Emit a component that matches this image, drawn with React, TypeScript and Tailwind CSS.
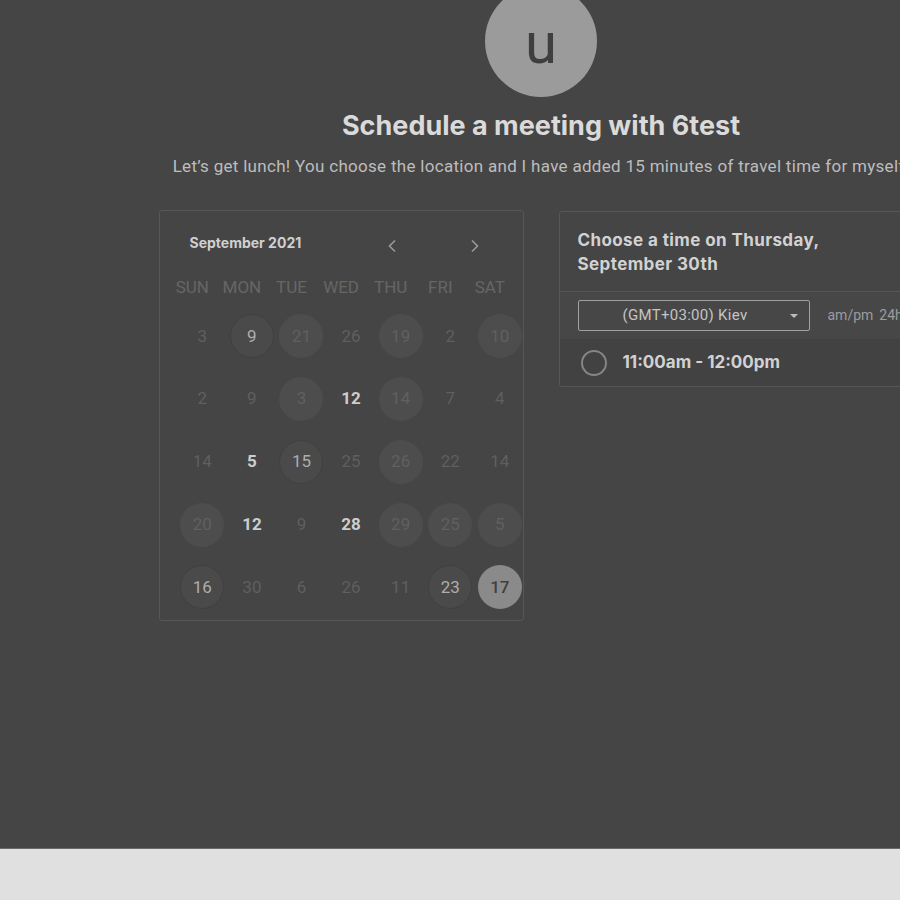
import React from "react";

type Kind = "dim" | "circle" | "bold" | "pattern" | "selected";
type Cell = [string, Kind];

const weeks: Cell[][] = [
  [["3", "dim"], ["9", "pattern"], ["21", "circle"], ["26", "dim"], ["19", "circle"], ["2", "dim"], ["10", "circle"]],
  [["2", "dim"], ["9", "dim"], ["3", "circle"], ["12", "bold"], ["14", "circle"], ["7", "dim"], ["4", "dim"]],
  [["14", "dim"], ["5", "bold"], ["15", "pattern"], ["25", "dim"], ["26", "circle"], ["22", "dim"], ["14", "dim"]],
  [["20", "circle"], ["12", "bold"], ["9", "dim"], ["28", "bold"], ["29", "circle"], ["25", "circle"], ["5", "circle"]],
  [["16", "pattern"], ["30", "dim"], ["6", "dim"], ["26", "dim"], ["11", "dim"], ["23", "pattern"], ["17", "selected"]],
];

const days = ["SUN", "MON", "TUE", "WED", "THU", "FRI", "SAT"];

function DayCell({ label, kind }: { label: string; kind: Kind }) {
  let cls = "";
  if (kind === "dim") cls = "text-[#5f5f5f]";
  if (kind === "bold") cls = "text-[#cdcdcd] font-bold";
  if (kind === "circle") cls = "bg-[#4d4d4d] text-[#606060]";
  if (kind === "pattern") cls = "bg-[#4a4a4a] border border-[#404040] text-[#adadad]";
  if (kind === "selected") cls = "bg-[#8a8a8a] text-[#404040] font-medium";
  return (
    <div className="flex items-center justify-center h-[62.75px]">
      <div className={`w-[44px] h-[44px] rounded-full flex items-center justify-center text-[17px] ${cls}`}>{label}</div>
    </div>
  );
}

export default function App() {
  return (
    <div className="w-[900px] h-[900px] overflow-hidden bg-[#e0e0e0] flex flex-col" style={{ fontFamily: "Roboto, 'Liberation Sans', sans-serif" }}>
      <div className="h-[849px] bg-[#454545] border-b border-[#6a6a6a] overflow-hidden shrink-0">
        <div className="w-[1082px] flex flex-col items-center">
          <div className="w-[112px] h-[112px] rounded-full bg-[#9b9b9b] mt-[-15px] flex items-center justify-center text-[#3f3f3f] text-[58px] leading-none pt-[4px]">
            u
          </div>
          <h1 className="mt-[14px] text-[27px] leading-[30px] font-bold text-[#dadada]" style={{ fontFamily: "Inter, sans-serif" }}>
            Schedule a meeting with 6test
          </h1>
          <p className="mt-[14px] text-[17px] tracking-[0.3px] leading-[22px] text-[#bdbdbd] whitespace-nowrap">
            Let’s get lunch! You choose the location and I have added 15 minutes of travel time for myself.
          </p>
          <div className="mt-[33px] flex gap-[35px] items-start">
            {/* Calendar */}
            <div className="w-[365px] h-[411px] border border-[#565656] rounded-[3px] overflow-hidden">
              <div className="pt-[22px] pl-[30px] flex items-center h-[42px]" style={{ fontFamily: "Inter, sans-serif" }}>
                <span className="text-[14px] font-bold text-[#d0d0d0] leading-[20px]">September 2021</span>
                <span className="ml-[86px] mt-[6px] text-[#9a9a9a]">
                  <svg width="10" height="14" viewBox="0 0 10 14"><path d="M8 1.5 L2.5 7 L8 12.5" fill="none" stroke="currentColor" strokeWidth="1.6" /></svg>
                </span>
                <span className="ml-[73px] mt-[6px] text-[#9a9a9a]">
                  <svg width="10" height="14" viewBox="0 0 10 14"><path d="M2 1.5 L7.5 7 L2 12.5" fill="none" stroke="currentColor" strokeWidth="1.6" /></svg>
                </span>
              </div>
              <div className="pl-[18px] mt-[20px]">
                <div className="ml-[-10px] grid grid-cols-[repeat(7,49.6px)] h-[30px] items-center">
                  {days.map((d) => (
                    <div key={d} className="text-center text-[17px] text-[#666666]">{d}</div>
                  ))}
                </div>
                <div className="mt-[2px]">
                  {weeks.map((w, i) => (
                    <div key={i} className="grid grid-cols-[repeat(7,49.6px)]">
                      {w.map(([l, k], j) => (
                        <DayCell key={j} label={l} kind={k} />
                      ))}
                    </div>
                  ))}
                </div>
              </div>
            </div>
            {/* Times */}
            <div className="mt-[1px] w-[365px] border border-[#565656] rounded-[3px] overflow-hidden" style={{ fontFamily: "Inter, sans-serif" }}>
              <div className="px-[18px] pt-[16px] pb-[15px] border-b border-[#555555] text-[17px] tracking-[0.4px] leading-[24px] font-bold text-[#d2d2d2]">
                Choose a time on Thursday,
                <br />
                September 30th
              </div>
              <div className="flex items-center pl-[18px] h-[47px] bg-[#474747]">
                <div className="w-[232px] h-[31px] border border-[#a0a0a0] rounded-[2px] flex items-center relative" style={{ fontFamily: "Roboto, sans-serif" }}>
                  <span className="ml-[44px] text-[15px] tracking-[0.3px] text-[#c4c4c4]">(GMT+03:00) Kiev</span>
                  <span className="absolute right-[11px] top-[13px] w-0 h-0 border-l-[4px] border-r-[4px] border-t-[4px] border-l-transparent border-r-transparent border-t-[#bdbdbd]" />
                </div>
                <span className="ml-[18px] text-[14px] text-[#9c9c9c]" style={{ fontFamily: "Roboto, sans-serif" }}>am/pm</span>
                <span className="ml-[6px] text-[14px] text-[#9c9c9c]" style={{ fontFamily: "Roboto, sans-serif" }}>24h</span>
              </div>
              <div className="flex items-center h-[47px] bg-[#424242] pl-[21px]">
                <div className="w-[26px] h-[26px] rounded-full border-2 border-[#858585]" />
                <span className="ml-[16px] text-[17px] font-bold text-[#d2d2d2]">11:00am - 12:00pm</span>
              </div>
            </div>
          </div>
        </div>
      </div>
    </div>
  );
}
